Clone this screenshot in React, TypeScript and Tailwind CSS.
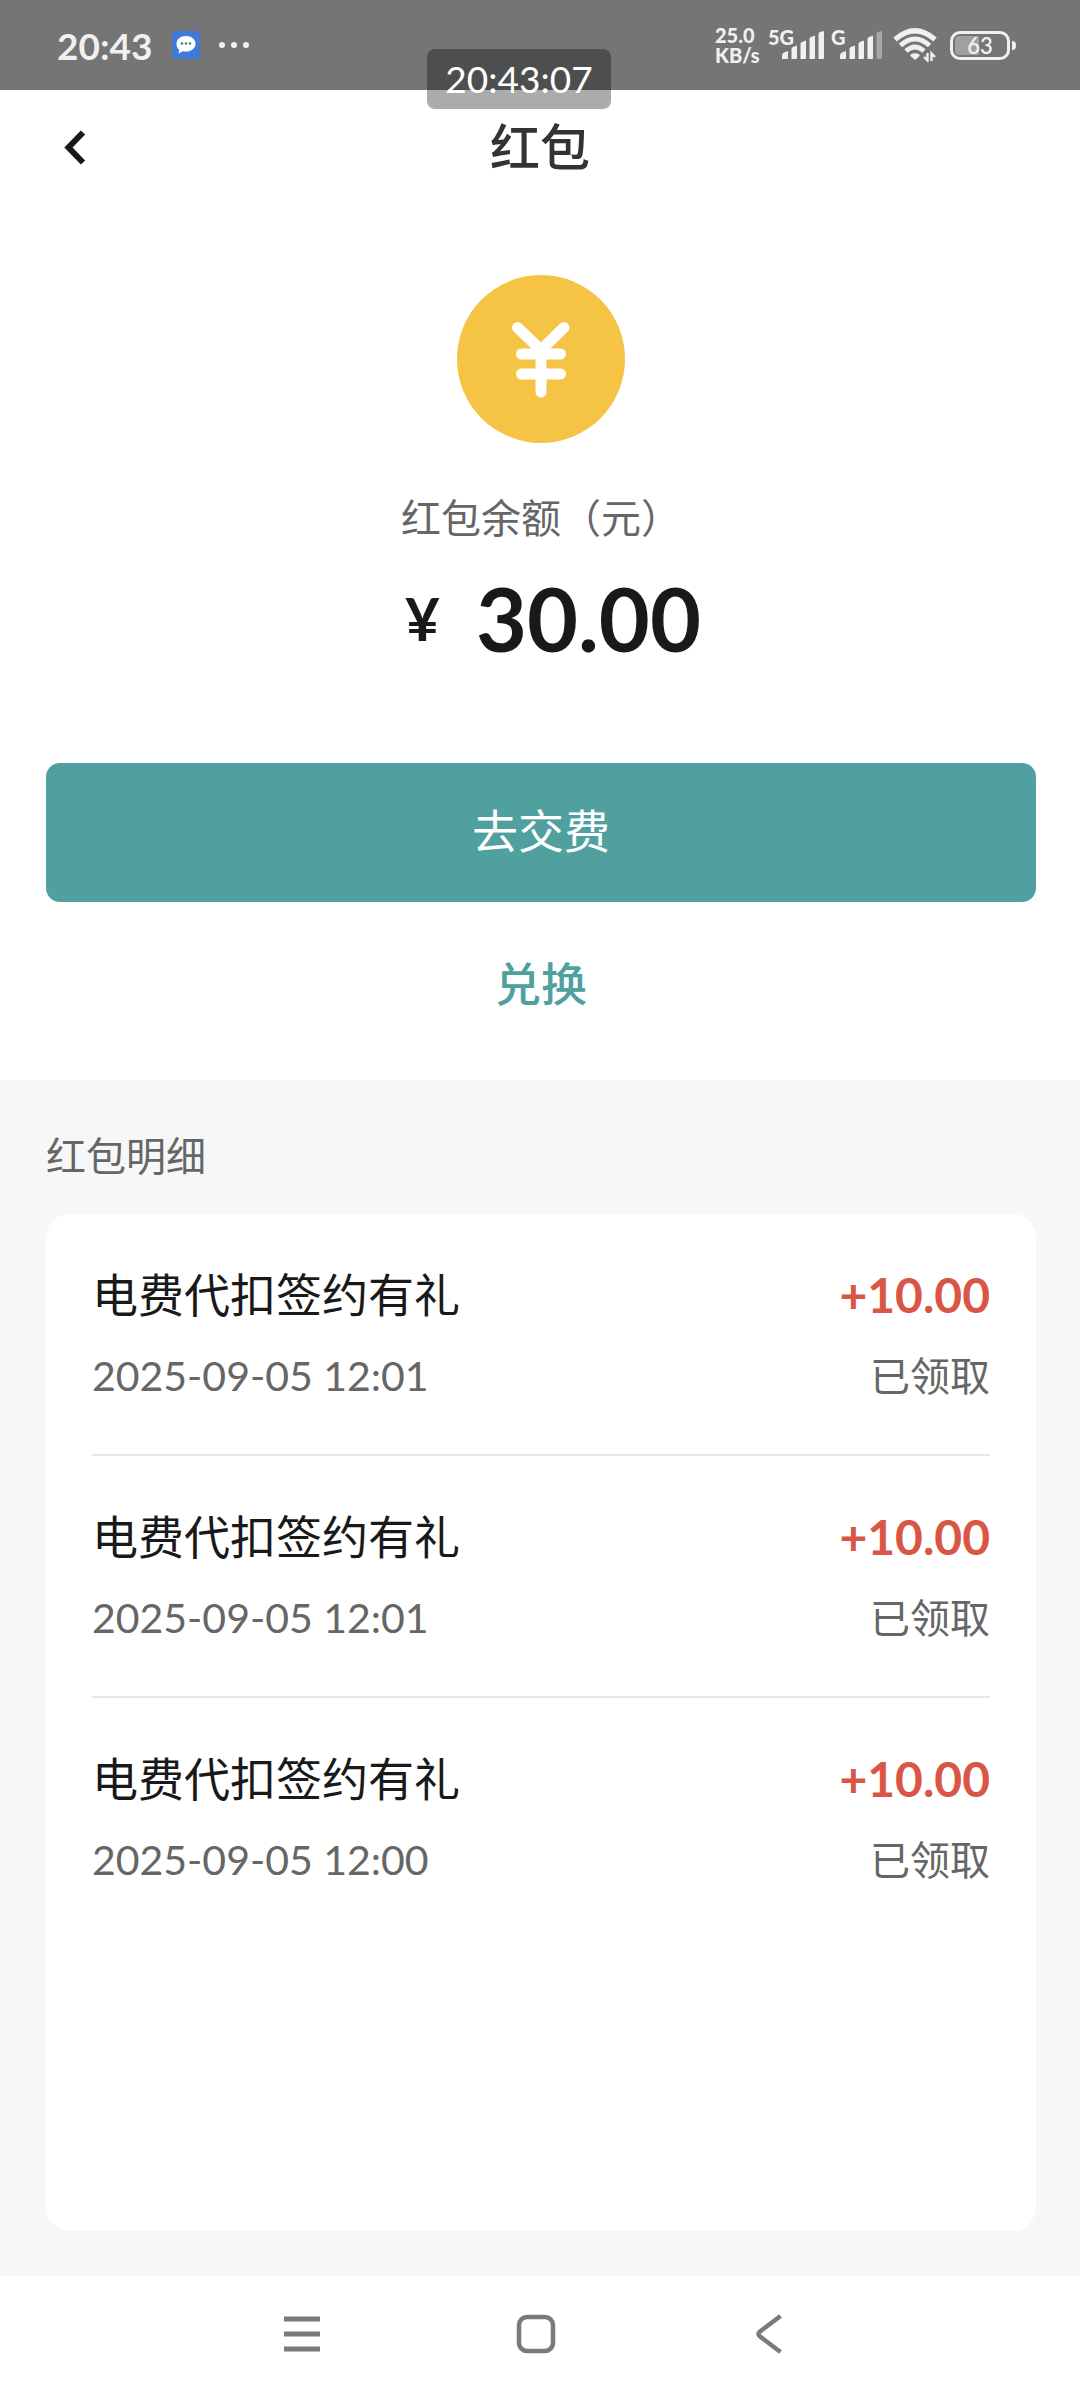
import type { ReactNode } from "react";

const records = [
  { id: 1, title: "电费代扣签约有礼", time: "2025-09-05 12:01", amount: "+10.00", status: "已领取" },
  { id: 2, title: "电费代扣签约有礼", time: "2025-09-05 12:01", amount: "+10.00", status: "已领取" },
  { id: 3, title: "电费代扣签约有礼", time: "2025-09-05 12:00", amount: "+10.00", status: "已领取" },
];

function ChatIcon() {
  return (
    <svg width="30" height="30" viewBox="0 0 30 30" aria-hidden="true">
      <rect x="1" y="1" width="28" height="28" rx="4" fill="#3f7ad9" />
      <path
        d="M15 6c5.400 0 9.500 3.300 9.500 7.800S20.400 21.600 15 21.600c-1.200 0-2.200-.1-3.200-.4L7.500 23.500l.8-3.600C6.400 18.500 5.500 16.400 5.500 13.800 5.500 9.300 9.600 6 15 6z"
        fill="#fff"
      />
      <circle cx="11" cy="13.500" r="1.300" fill="#2f8a8a" />
      <circle cx="15" cy="13.500" r="1.300" fill="#2f8a8a" />
      <circle cx="19" cy="13.500" r="1.300" fill="#2f8a8a" />
    </svg>
  );
}

function Signal({ weak = false }: { weak?: boolean }) {
  return (
    <svg width="42" height="28" viewBox="0 0 42 28" fill="#f0f0f0" aria-hidden="true">
      <path d="M0 28v-3q0-3 3-4l3-1V27q0 1-1 1z" />
      <path d="M9.500 28V18q0-1.500 1.500-2l4-1.500V27q0 1-1 1z" />
      <path d="M18.500 28V13q0-1.500 1.500-2l4-1.500V27q0 1-1 1z" />
      <path d="M27.500 28V8q0-1.500 1.500-2l4-1.500V27q0 1-1 1z" />
      <path d="M36.500 28V3q0-1.500 1.500-2l4-1V27q0 1-1 1z" opacity={weak ? 0.4 : 1} />
    </svg>
  );
}

function WifiIcon() {
  return (
    <svg width="44" height="34" viewBox="0 0 44 34" fill="none" stroke="#f0f0f0" aria-hidden="true">
      <path d="M2 11.500Q22-6 42 11.500" strokeWidth="5.200" />
      <path d="M7.500 17.500Q22 4.500 36.500 17.500" strokeWidth="5" />
      <path d="M13 23Q22 15 31 23" strokeWidth="5" />
      <path d="M17.500 26.500q4.500-2.500 9 0v1.500L22 32l-4.500-4z" fill="#f0f0f0" stroke="none" />
      <path d="M34.500 25v7.500l-3.500-3.500M38.500 33v-7.500l3.500 3.500" strokeWidth="2.400" />
    </svg>
  );
}

function Battery({ level }: { level: number }) {
  return (
    <div className="flex items-center gap-0.5">
      <div className="relative h-[29px] w-[60px] overflow-hidden rounded-[10px] border-3 border-[#f0f0f0]">
        <div className="absolute inset-y-0.5 left-0.5 w-6 rounded-l-sm bg-[#a0a0a0]" />
        <span className="relative block text-center text-[22px] leading-[23px] font-semibold">{level}</span>
      </div>
      <div className="h-[9px] w-1 rounded-r-sm bg-[#f0f0f0]" />
    </div>
  );
}

function StatusBar() {
  return (
    <div className="relative flex h-[90px] items-center justify-between bg-[#757575] pr-16 pl-[57px] text-[#f0f0f0]">
      <div className="flex items-center">
        <span className="text-[37px] leading-[37px] font-bold">20:43</span>
        <div className="ml-[19px]">
          <ChatIcon />
        </div>
        <div className="ml-[18px] flex gap-1.5">
          <i className="size-1.5 rounded-full bg-[#f0f0f0]" />
          <i className="size-1.5 rounded-full bg-[#f0f0f0]" />
          <i className="size-1.5 rounded-full bg-[#f0f0f0]" />
        </div>
      </div>

      <div className="flex items-center text-[20px] leading-[20px] font-black">
        <div className="w-[53px] whitespace-nowrap">
          <div>25.0</div>
          <div>KB/s</div>
        </div>
        <div className="relative w-[63px] pl-[14px]">
          <span className="absolute -top-1 left-0">5G</span>
          <Signal />
        </div>
        <div className="relative w-[62px] pl-[9px]">
          <span className="absolute -top-1 left-0">G</span>
          <Signal weak />
        </div>
        <div className="w-[57px]">
          <WifiIcon />
        </div>
        <Battery level={63} />
      </div>

      {/* floating clock overlay */}
      <div className="absolute top-[49px] left-[427px] z-10 h-[60px] w-[184px] rounded-lg bg-black/33 text-center text-[37px] leading-[60px] text-white">
        20:43:07
      </div>
    </div>
  );
}

function YuanCoin() {
  return (
    <svg width="168" height="168" viewBox="0 0 168 168" aria-hidden="true">
      <circle cx="84" cy="84" r="84" fill="#f5c445" />
      <path
        d="M60.500 52.500L84 75l23-22.500M84 73v44M64.500 79h39M64.500 99h39"
        fill="none"
        stroke="#fff"
        strokeWidth="11"
        strokeLinecap="round"
        strokeLinejoin="round"
      />
    </svg>
  );
}

function NavButton({ label, children }: { label: string; children: ReactNode }) {
  return (
    <button type="button" aria-label={label} className="flex h-full w-[234px] items-center justify-center">
      <svg width="40" height="40" viewBox="0 0 40 40" fill="none" stroke="#7a7a7a" aria-hidden="true">
        {children}
      </svg>
    </button>
  );
}

export default function App() {
  return (
    <div className="flex min-h-screen flex-col bg-white font-['Lato','Noto_Sans_CJK_SC',sans-serif] text-[#191919]">
      <StatusBar />

      <header className="relative flex h-[114px] items-center justify-center">
        <button type="button" aria-label="返回" className="absolute left-[54px] flex size-10 items-center justify-center">
          <svg width="40" height="40" viewBox="0 0 40 40" fill="none" stroke="#191919" strokeWidth="6" aria-hidden="true">
            <path d="M29 5.500L14.500 20.500 29 35.500" />
          </svg>
        </button>
        <h1 className="text-[50px] leading-[60px] font-medium text-[#333]">红包</h1>
      </header>

      <main className="flex flex-1 flex-col">
        <section className="flex flex-col items-center pt-[71px] pr-11 pb-[57px] pl-[46px]">
          <YuanCoin />
          <p className="mt-[45px] text-[40px] leading-[60px] text-[#666]">红包余额（元）</p>
          <p className="mt-[22px] flex items-center gap-9 pl-6 leading-[96px] font-bold">
            <span className="text-[60px]">¥</span>
            <span className="text-[88px]">30.00</span>
          </p>
          <button type="button" className="mt-[97px] h-[139px] w-full rounded-[14px] bg-[#50a0a0] pb-1 text-[46px] text-white">
            去交费
          </button>
          <button type="button" className="mt-[41px] h-20 px-10 text-[46px] font-medium text-[#50a0a0]">
            兑换
          </button>
        </section>

        <section className="flex flex-1 flex-col bg-[#f6f7f9] pt-[46px] pr-11 pb-[45px] pl-[46px]">
          <h2 className="text-[40px] leading-[60px] text-[#666]">红包明细</h2>
          <ul className="mt-7 flex-1 rounded-3xl bg-white px-[46px]">
            {records.map((r) => (
              <li key={r.id} className="h-[242px] border-b-2 border-[#e6e6e6] pt-[46px] last:border-b-0">
                <div className="flex items-center justify-between leading-[70px]">
                  <span className="text-[46px]">{r.title}</span>
                  <span className="text-[48px] font-bold text-[#d95545]">{r.amount}</span>
                </div>
                <div className="mt-1.5 flex items-center justify-between leading-[80px] text-[#666]">
                  <time className="text-[41px]">{r.time}</time>
                  <span className="text-[40px]">{r.status}</span>
                </div>
              </li>
            ))}
          </ul>
        </section>
      </main>

      <nav className="flex h-[124px] justify-center bg-white pr-2 pb-2">
        <NavButton label="最近任务">
          <path d="M2 5h36M2 20h36M2 35h36" strokeWidth="5" />
        </NavButton>
        <NavButton label="主页">
          <rect x="3" y="3" width="34" height="34" rx="8" strokeWidth="4.500" />
        </NavButton>
        <NavButton label="返回上一页">
          <path d="M30.500 2L10 17.500Q7 20 10 22.500L30.500 38" strokeWidth="4.500" />
        </NavButton>
      </nav>
    </div>
  );
}
